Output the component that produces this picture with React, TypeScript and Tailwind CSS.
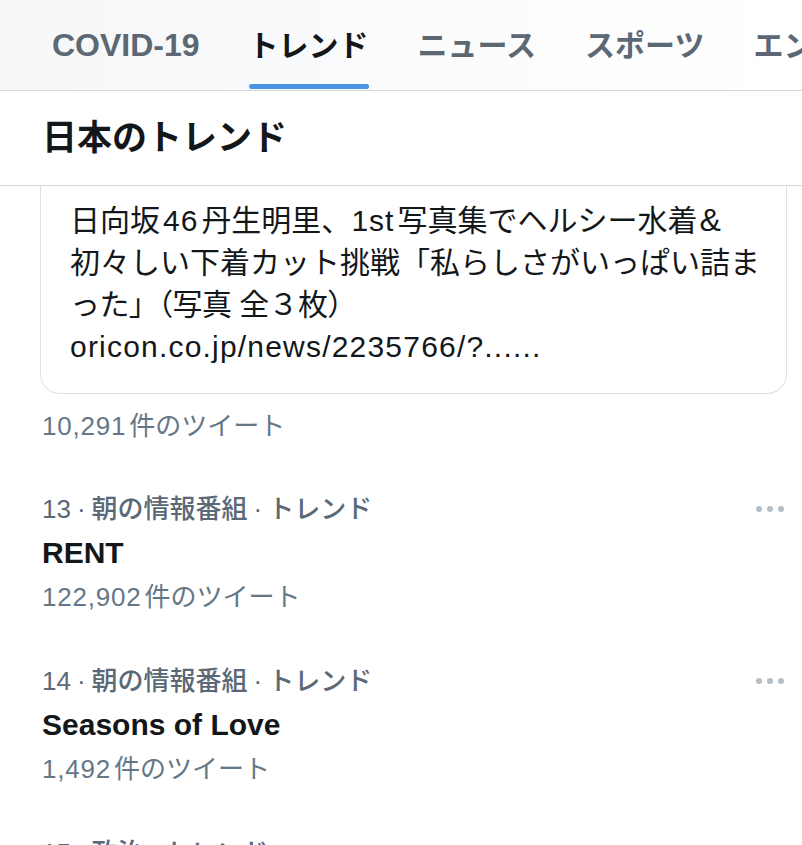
import React from "react";

const font = { fontFamily: '"Liberation Sans", "Noto Sans CJK JP", sans-serif' };

const tabs = ["COVID-19", "トレンド", "ニュース", "スポーツ", "エンタメ"];

const trends = [
  { rank: 13, cat: "朝の情報番組", name: "RENT", count: "122,902" },
  { rank: 14, cat: "朝の情報番組", name: "Seasons of Love", count: "1,492" },
  { rank: 15, cat: "政治", name: "", count: "" },
];

const Dots = () => (
  <div className="flex items-center gap-[5px]">
    <span className="w-[6px] h-[6px] rounded-full bg-[#b3bec7]"></span>
    <span className="w-[6px] h-[6px] rounded-full bg-[#b3bec7]"></span>
    <span className="w-[6px] h-[6px] rounded-full bg-[#b3bec7]"></span>
  </div>
);

const Count = ({ n }: { n: string }) => (
  <p className="text-[26px] leading-[44px] text-[#657786]">
    <span className="tracking-[0.8px] mr-[3px]">{n}</span>件のツイート
  </p>
);

const App = () => {
  return (
    <div className="w-[802px] h-[845px] overflow-hidden bg-white text-[#14171a]" style={font}>
      <nav className="h-[91px] flex gap-[49px] pl-[52px] border-b border-[#d3d9de] bg-gradient-to-r from-[#f6f7f9] to-white overflow-hidden whitespace-nowrap">
        {tabs.map((t) => (
          <div
            key={t}
            className={`relative h-full flex items-center shrink-0 font-bold ${
              t === "COVID-19" ? "text-[32px]" : "text-[30px]"
            } ${t === "トレンド" ? "text-[#14171a]" : "text-[#5c6873]"}`}
          >
            {t}
            {t === "トレンド" && (
              <span className="absolute left-0 right-0 bottom-[1px] h-[5px] rounded-full bg-[#4a94e3]"></span>
            )}
          </div>
        ))}
      </nav>

      <header className="h-[95px] flex items-center pl-[42px] border-b border-[#d3d9de]">
        <h1 className="text-[35px] font-bold">日本のトレンド</h1>
      </header>

      <div className="ml-[40px] mr-[15px] border-x border-b border-[#dde2e6] rounded-b-[20px] pt-[13px] pb-[25px] pl-[29px]">
        <div className="text-[30px] leading-[42px] whitespace-nowrap">
          <p>
            日向坂<span className="mx-[3px] tracking-[1px]">46</span>丹生明里、
            <span className="mr-[3px] tracking-[1px]">1st</span>写真集でヘルシー水着
            <span className="ml-[2px] text-[32px]">&amp;</span>
          </p>
          <p>初々しい下着カット挑戦「私らしさがいっぱい詰ま</p>
          <p className="tracking-[-0.6px]">った」（写真 全３枚）</p>
          <p className="tracking-[1.2px]">oricon.co.jp/news/2235766/?......</p>
        </div>
      </div>

      <div className="mt-[10px] pl-[42px]">
        <Count n="10,291" />
      </div>

      <div className="mt-[39px] flex flex-col gap-[40px]">
        {trends.map((t) => (
          <div key={t.rank} className="pl-[42px] pr-[18px]">
            <div className="flex items-center justify-between h-[44px]">
              <span className="text-[26px] font-medium text-[#5b6976] whitespace-nowrap">
                {t.rank}
                <span className="mx-[6px]">·</span>
                {t.cat}
                <span className="mx-[6px]">·</span>
                トレンド
              </span>
              <Dots />
            </div>
            <p className="text-[30px] font-bold leading-[44px]">{t.name}</p>
            {t.count && <Count n={t.count} />}
          </div>
        ))}
      </div>
    </div>
  );
};

export default App;
